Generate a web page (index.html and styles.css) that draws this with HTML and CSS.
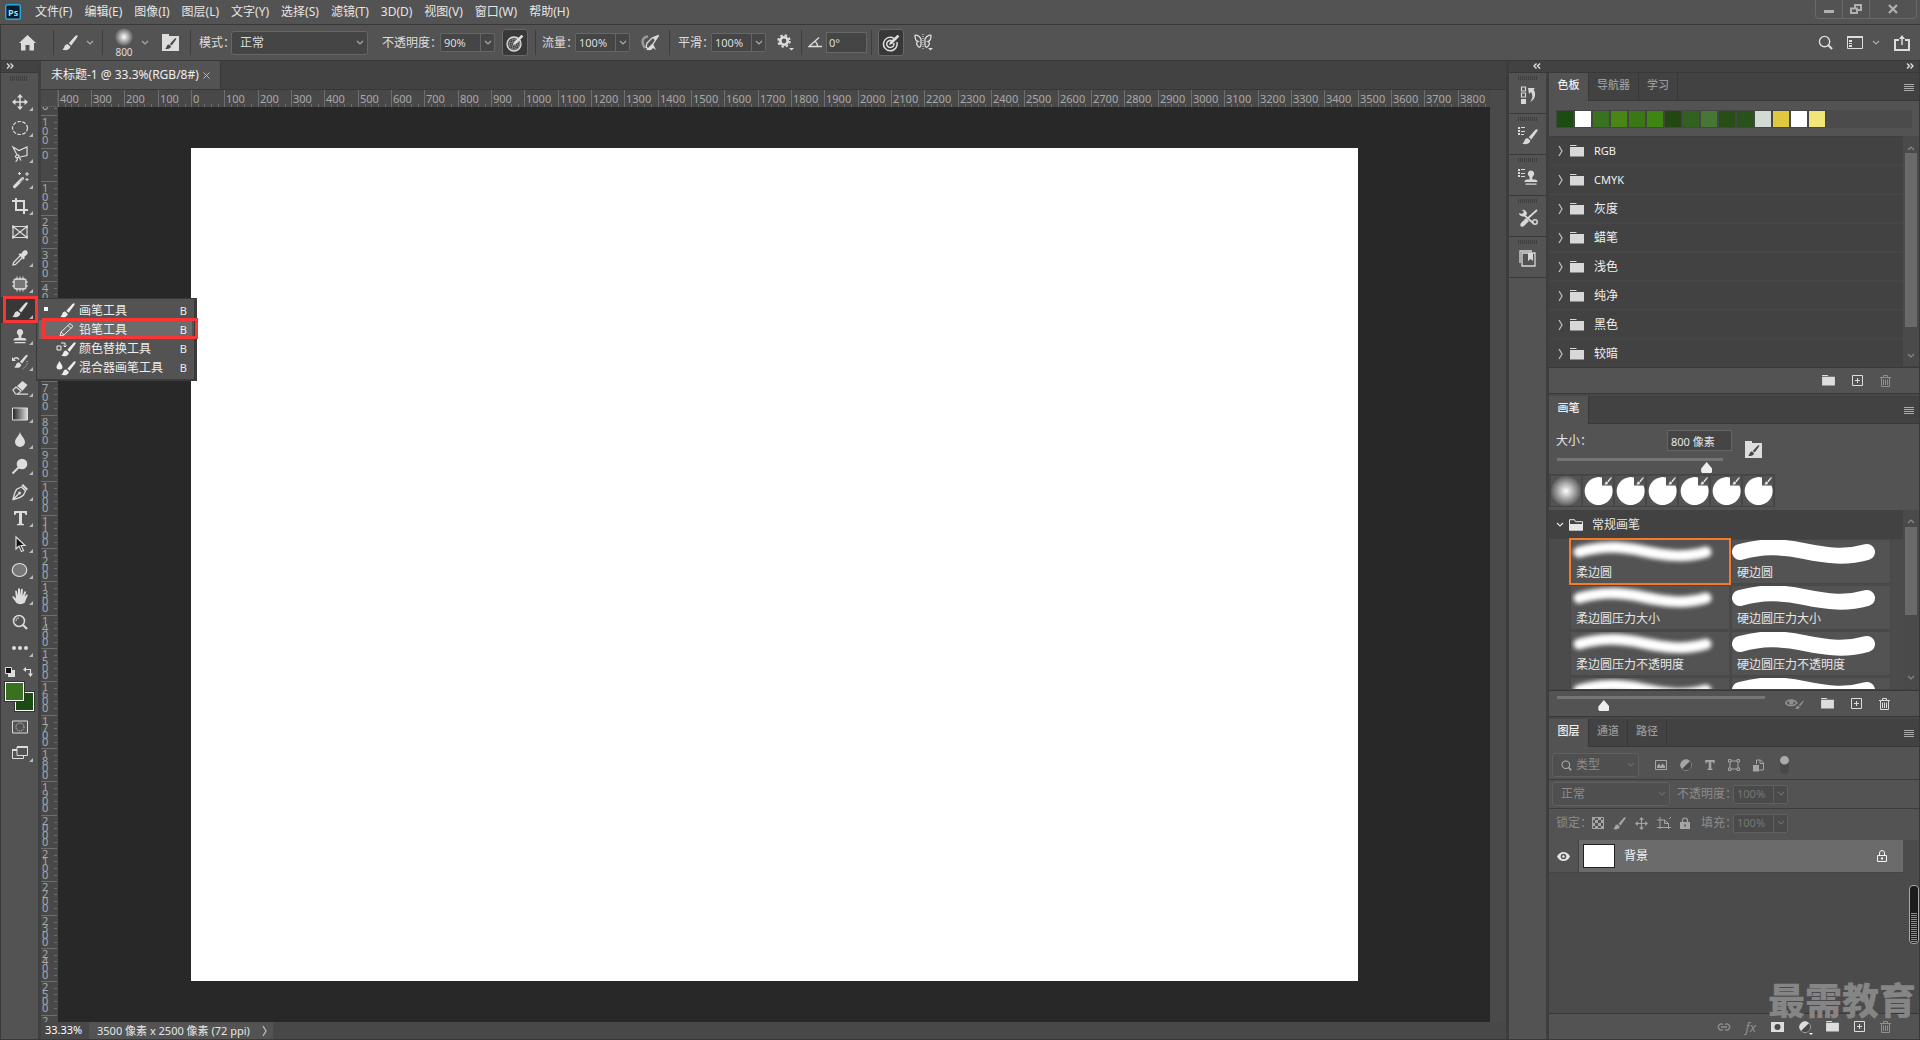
FILE: index.html
```html
<!DOCTYPE html>
<html lang="zh-CN">
<head>
  <meta charset="UTF-8">
  <title>未标题-1 @ 33.3%(RGB/8#)</title>
  <link rel="stylesheet" href="styles.css">
</head>
<body>

  <svg class="defs" width="0" height="0" aria-hidden="true">
    <radialGradient id="tip"><stop offset="0" stop-color="#fff"/><stop offset="1" stop-color="#fff" stop-opacity="0.05"/></radialGradient>
    <linearGradient id="grad"><stop offset="0" stop-color="#222"/><stop offset="1" stop-color="#ddd"/></linearGradient>
    <symbol id="chev" viewBox="0 0 8 6"><path d="M1 1l3 3 3-3" fill="none" stroke="currentColor" stroke-width="1.2"/></symbol>
    <symbol id="right" viewBox="0 0 6 12"><path d="M1 1l3 5-3 5" fill="none" stroke="currentColor" stroke-width="1.3"/></symbol>
    <symbol id="dbl" viewBox="0 0 8 6"><path d="M1 .5l2.500 2.500L1 5.500M4.500.5L7 3 4.500 5.500" fill="none" stroke="currentColor" stroke-width="1.300"/></symbol>
    <symbol id="brush" viewBox="0 0 16 16"><path d="M15.500.5c-1-.6-2.200.5-3.200 1.500L6.800 8.200l2.400 2.200 5-6.700c.8-1 2-2.600 1.300-3.200zM5.800 9.200c-1.800-.3-3 .8-3.400 2.600-.3 1.200-.9 2-2.200 2.700 2.800 1.400 7.500 1 8.200-2.900z"/></symbol>
    <symbol id="presets" viewBox="0 0 17 17"><path d="M0 0h7v2h10v15H0z"/><g fill="#484848" transform="translate(3 4) scale(.72)"><path d="M15.500.5c-1-.6-2.200.5-3.200 1.500L6.800 8.200l2.400 2.200 5-6.700c.8-1 2-2.600 1.300-3.200zM5.800 9.200c-1.800-.3-3 .8-3.400 2.600-.3 1.200-.9 2-2.200 2.700 2.800 1.400 7.500 1 8.200-2.900z"/></g></symbol>
    <symbol id="folder" viewBox="0 0 14 12"><path d="M0 0h6l1 1H0zM0 2h14v9.500H0z"/></symbol>
    <symbol id="folder-open" viewBox="0 0 14 12"><path d="M.5 11V.7h5l1 2h7V11z" fill="none" stroke="currentColor"/><path d="M0 5h14v6.500H0z"/></symbol>
    <symbol id="plus" viewBox="0 0 11 11"><path d="M.5.5h10v10H.5zM5.500 3v5M3 5.500h5" fill="none" stroke="currentColor"/></symbol>
    <symbol id="trash" viewBox="0 0 11 12"><path d="M0 2.500h11M3.500 2V.5h4V2M1.500 3v8.500h8V3M3.500 4.500v5.500M5.500 4.500v5.500M7.500 4.500v5.500" fill="none" stroke="currentColor"/></symbol>
    <symbol id="lines" viewBox="0 0 10 7"><path d="M0 .5h10M0 2.500h10M0 4.500h10M0 6.500h10" stroke="currentColor"/></symbol>
    <symbol id="move" viewBox="0 0 16 16"><path d="M8 0l3 3.500H8.700v3.800h3.800V5L16 8l-3.500 3V8.700H8.700v3.800H11L8 16l-3-3.500h2.300V8.700H3.500V11L0 8l3.500-3v2.300h3.800V3.500H5z"/></symbol>
    <symbol id="stamp" viewBox="0 0 16 16"><path d="M8 1a3.200 3.200 0 0 0-2 5.700c.8.900.8 2 .5 3.300H4c-1.500 0-2.500 1-2.500 2.500h13C14.500 11 13.500 10 12 10H9.500c-.3-1.300-.3-2.400.5-3.300A3.200 3.200 0 0 0 8 1zM2.500 14h11v1.200h-11z"/></symbol>
    <symbol id="stroke" viewBox="0 1 158 22"><path d="M10 13C32 7 50 7 74 12s42 7 63 1" fill="none" stroke="#fff" stroke-linecap="round"/></symbol>
    <symbol id="target" viewBox="0 0 18 18"><path d="M12 4.300A6.800 6.800 0 1 0 14.800 8M10 6.800a3.600 3.600 0 1 0 1.800 2.200" fill="none" stroke="currentColor" stroke-width="1.500"/><path d="M7 11l1-3L15.500.8l1.900 1.700L10 10z"/></symbol>
    <symbol id="adjust" viewBox="0 0 12 12"><circle cx="6" cy="6" r="5.300" fill="none" stroke="currentColor"/><path d="M9.800 2.200A5.300 5.300 0 0 1 2.200 9.800z" fill="#484848"/><path d="M9.800 2.200A5.300 5.300 0 0 0 2.200 9.800z"/></symbol>
    <symbol id="loupe" viewBox="0 0 16 16"><circle cx="7" cy="7" r="5.500" fill="none" stroke="currentColor" stroke-width="1.500"/><path d="M11 11l4 4" stroke="currentColor" stroke-width="2.200"/></symbol>
    <symbol id="lock" viewBox="0 0 10 12"><path d="M2.500 5V3.500a2.500 2.500 0 0 1 5 0V5" fill="none" stroke="currentColor" stroke-width="1.200"/><path d="M0 5h10v7H0z"/><path d="M5 7.500v2" stroke="#484848" stroke-width="1.500"/></symbol>
  </svg>

  <header class="menubar">
    <svg class="logo" width="16" height="16" viewBox="0 0 16 16"><rect x=".7" y=".7" width="14.600" height="14.600" rx="2" fill="#001e2c" stroke="#31a8e0" stroke-width="1.400"/><text x="3" y="11.500" fill="#9fdcff" font-size="9" font-weight="bold" font-family="Open Sans, sans-serif">Ps</text></svg>
    <nav class="menus">
      <button>文件(F)</button><button>编辑(E)</button><button>图像(I)</button><button>图层(L)</button><button>文字(Y)</button><button>选择(S)</button><button>滤镜(T)</button><button>3D(D)</button><button>视图(V)</button><button>窗口(W)</button><button>帮助(H)</button>
    </nav>
    <div class="winbtns">
      <button aria-label="最小化"><svg width="10" height="10"><path d="M0 6h10v3H0z"/></svg></button>
      <button aria-label="还原"><svg width="12" height="10" viewBox="0 0 12 10"><path d="M1 4.500h6V9H1zM5 4V1h6v5H7" fill="none" stroke="currentColor" stroke-width="2"/></svg></button>
      <button class="close" aria-label="关闭"><svg width="10" height="10" viewBox="0 0 10 10"><path d="M1 1l8 8M9 1L1 9" stroke="currentColor" stroke-width="2.200"/></svg></button>
    </div>
  </header>

  <div class="options">
    <div class="group home"><button aria-label="主页"><svg width="17" height="16" viewBox="0 0 17 16"><path d="M8.500 0L0 8h2v7.500h4.500V10h4v5.500H15V8h2z"/></svg></button></div>
    <div class="group brush-tool"><svg width="16" height="16"><use href="#brush"/></svg><svg class="arrow" width="8" height="6"><use href="#chev"/></svg></div>
    <div class="group tip-picker">
      <div class="tip"><svg width="18" height="18"><circle cx="9" cy="9" r="9" fill="url(#tip)"/></svg><span>800</span></div>
      <svg class="arrow" width="8" height="6"><use href="#chev"/></svg>
      <svg class="folder-brush" width="17" height="17"><use href="#presets"/></svg>
    </div>
    <div class="group mode">
      <label for="mode">模式：</label>
      <span class="select mode-select"><select id="mode"><option>正常</option></select><svg width="8" height="6"><use href="#chev"/></svg></span>
      <label for="opacity" class="opacity-label">不透明度：</label>
      <span class="combo"><input id="opacity" value="90%"><button aria-label="不透明度选项"><svg width="8" height="6"><use href="#chev"/></svg></button></span>
      <button class="toggle on" aria-label="压力不透明度"><svg width="18" height="18" viewBox="0 0 18 18"><circle cx="8" cy="10" r="7" fill="#777" stroke="currentColor" stroke-width="1.300"/><path d="M3 7h10M2 10h12M3 13h10M5 5v10M8 4v12M11 5v10" stroke="#333" stroke-dasharray="1 1"/><path d="M7 11l1-3L15.500.8l1.900 1.700L10 10z"/></svg></button>
    </div>
    <div class="group flow">
      <label for="flow">流量：</label>
      <span class="combo"><input id="flow" value="100%"><button aria-label="流量选项"><svg width="8" height="6"><use href="#chev"/></svg></button></span>
      <button class="airbrush" aria-label="喷枪"><svg width="18" height="16" viewBox="0 0 18 16"><path d="M7 1.500C1 2 0 8 4 13" fill="none" stroke="#999" stroke-width="2.500"/><path d="M17.500.5L11 3 6 8l-1 4 3 2.500L12 9z" fill="none" stroke="currentColor" stroke-width="1.300"/><path d="M17.500.5L12 3l2 2.500zM5 15l5-5 2-1 3 6-3-2-2 2z"/></svg></button>
    </div>
    <div class="group smooth">
      <label for="smooth">平滑：</label>
      <span class="combo"><input id="smooth" value="100%"><button aria-label="平滑选项"><svg width="8" height="6"><use href="#chev"/></svg></button></span>
      <button class="gear" aria-label="平滑设置"><svg width="18" height="17" viewBox="0 0 18 17"><circle cx="7" cy="7" r="3.700" fill="none" stroke="currentColor" stroke-width="2.600"/><circle cx="7" cy="7" r="5.700" fill="none" stroke="currentColor" stroke-width="2" stroke-dasharray="2.400 2.080"/><path d="M12 14h5l-2.500 2.500z"/></svg></button>
    </div>
    <div class="group angle">
      <label for="angle" aria-label="角度"><svg width="14" height="11" viewBox="0 0 14 11"><path d="M11 .5L1 9.500h13M7 4.500c2 1 2.500 3 2.500 5" fill="none" stroke="currentColor" stroke-width="1.300"/></svg></label>
      <input id="angle" value="0°">
    </div>
    <div class="group sym">
      <button class="toggle on" aria-label="压力大小"><svg width="18" height="18"><use href="#target"/></svg></button>
      <button class="butterfly" aria-label="对称"><svg width="19" height="17" viewBox="0 0 19 17"><path d="M7 5C5 1 1 .5 1 1.500c0 3 1 5.500 3 6-2 1-1.500 3-.5 4 1 2 3 3 3.500-1zM11 5c2-4 6-4.500 6-3.500 0 3-1 5.500-3 6 2 1 1.500 3 .5 4-1 2-3 3-3.500-1z" fill="none" stroke="currentColor" stroke-width="1.300"/><path d="M9 0v16" stroke="currentColor" stroke-dasharray="1 1"/><path d="M14 14h5l-2.500 2.500z"/></svg></button>
    </div>
    <div class="workspace">
      <button aria-label="搜索"><svg width="15" height="15"><use href="#loupe"/></svg></button>
      <button aria-label="工作区"><svg width="16" height="13" viewBox="0 0 16 13"><path d="M.5.500h15v12H.5z" fill="none" stroke="currentColor"/><path d="M0 0h16v2H0zM2 4h3v2H2zM2 7h3v1H2zM2 9h3v2H2z"/></svg></button>
      <svg class="arrow" width="8" height="6"><use href="#chev"/></svg>
      <button aria-label="共享"><svg width="16" height="16" viewBox="0 0 16 16"><path d="M5 5H1v10h14V5h-4" fill="none" stroke="currentColor" stroke-width="2"/><path d="M8 10V3" stroke="currentColor" stroke-width="1.500"/><path d="M8 0l3 4H5z"/></svg></button>
    </div>
  </div>

  <div class="work">
    <aside class="toolbar">
      <div class="strip"><svg width="8" height="6"><use href="#dbl"/></svg></div>
      <div class="grip"></div>
      <button class="tool" aria-label="移动"><svg viewBox="0 0 16 16"><use href="#move"/></svg></button>
      <button class="tool" aria-label="椭圆选框"><svg viewBox="0 0 16 16"><ellipse cx="8" cy="8" rx="7.500" ry="6.500" fill="none" stroke="currentColor" stroke-width="1.200" stroke-dasharray="3.500 1.500"/></svg></button>
      <button class="tool" aria-label="套索"><svg viewBox="0 0 16 16"><path d="M5 9L1 1l6 3.500L15 1v8.500l-7 1.500M7 9.500a2 1.500 0 1 0-3 2c1 1 3 0 3-2zM5 12c1 1 0 3-1.500 3.500M7 11l2 3.500" fill="none" stroke="currentColor" stroke-width="1.200"/></svg></button>
      <button class="tool" aria-label="魔棒"><svg viewBox="0 0 16 16"><path d="M1.500 13.500l8-8a1.500 1.500 0 0 1 2.200 2.200l-8 8a1.500 1.500 0 0 1-2.200-2.200z"/><path d="M10 6.500l1 1-3 3" stroke="#535353" fill="none"/><path d="M7.500 0v3M6 1.500h3M15 0v4M13 2h4M15 6v3M13.500 7.500h3" stroke="currentColor"/></svg></button>
      <button class="tool" aria-label="裁剪"><svg viewBox="0 0 16 16"><path d="M4 0v12h12M0 3h12v13" fill="none" stroke="currentColor" stroke-width="2" stroke-dasharray="25 1 6"/></svg></button>
      <button class="tool plain" aria-label="图框"><svg viewBox="0 0 16 16"><path d="M1 2.500h14v11H1zM1 2.500l14 11M15 2.500l-14 11" fill="none" stroke="currentColor" stroke-width="1.200"/><path d="M0 1.500h2v2H0zM14 1.500h2v2h-2zM0 12.500h2v2H0zM14 12.500h2v2h-2z"/></svg></button>
      <button class="tool" aria-label="吸管"><svg viewBox="0 0 16 16"><path d="M8 6l-6.500 6.500L1 15l2.500-.5L10 8" fill="none" stroke="currentColor" stroke-width="1.300"/><path d="M6.500 4.500l1.500-1.200 1.200.7C10 2 12.500-.8 14.800.8 17 3 14.500 5.500 12.300 6.700l.5 1.500-1.300 1.300z"/></svg></button>
      <button class="tool" aria-label="修补"><svg viewBox="0 0 16 16"><rect x="2" y="3" width="12" height="10" rx="2" fill="#777" stroke="currentColor" stroke-width="1.300"/><path d="M5 .5V4M8 .5V4M11 .5V4M5 12v3.500M8 12v3.500M11 12v3.500M0 6h3M0 10h3M13 6h3M13 10h3" stroke="currentColor"/></svg></button>
      <div class="brush-slot">
        <button class="tool active" aria-label="画笔"><svg viewBox="0 0 16 16"><use href="#brush"/></svg></button>
        <ul class="flyout">
          <li><button><i class="dot"></i><svg viewBox="0 0 20 16"><use href="#brush" x="4" width="15" height="15"/></svg><span>画笔工具</span><kbd>B</kbd></button></li>
          <li class="picked"><button><svg viewBox="0 0 20 16"><path d="M4 14l1-4L14 1.500l3 2.800L8 13zM5 10l3 3M12 3.500l3 3" fill="none" stroke="currentColor"/></svg><span>铅笔工具</span><kbd>B</kbd></button></li>
          <li><button><svg viewBox="0 0 20 16"><use href="#brush" x="5" y="1" width="15" height="15"/><path d="M1 5h4v4H1zM5 2h4v4M7.500 4.500L9 6l1.500-1.500" fill="none" stroke="currentColor"/></svg><span>颜色替换工具</span><kbd>B</kbd></button></li>
          <li><button><svg viewBox="0 0 20 16"><use href="#brush" x="5" y="1" width="15" height="15"/><path d="M3.500 1C2 4 .5 5 .5 7a3 2.500 0 0 0 6 0c0-2-1.500-3-3-6z"/></svg><span>混合器画笔工具</span><kbd>B</kbd></button></li>
        </ul>
      </div>
      <button class="tool" aria-label="仿制图章"><svg viewBox="0 0 16 16"><use href="#stamp"/></svg></button>
      <button class="tool" aria-label="历史记录画笔"><svg viewBox="0 0 16 16"><use href="#brush" x="2" y="0" width="14" height="15"/><path d="M7 5.500C5 3 3 3.500 2 5" fill="none" stroke="currentColor" stroke-width="1.500"/><path d="M0 3v4h4z"/><path d="M15 7c1 3-1 6-5 8" fill="none" stroke="currentColor" stroke-dasharray="1 1.500"/></svg></button>
      <button class="tool" aria-label="橡皮擦"><svg viewBox="0 0 16 16"><path d="M1 10l3-3 5 4-3 3H3.500z" fill="none" stroke="currentColor" stroke-width="1.200"/><path d="M5 6l5.500-5 5 4-5 5.800zM5 13.500h11v1.200H5z"/></svg></button>
      <button class="tool" aria-label="渐变"><svg viewBox="0 0 16 16"><path d="M.5 2h15v12H.5z" fill="url(#grad)" stroke="currentColor"/></svg></button>
      <button class="tool" aria-label="模糊"><svg viewBox="0 0 16 16"><path d="M8 0c-1 4-5 6.500-5 10a5 5 0 0 0 10 0c0-3.500-4-6-5-10z"/></svg></button>
      <button class="tool" aria-label="减淡"><svg viewBox="0 0 16 16"><circle cx="10" cy="6" r="5.300"/><path d="M7 9l-6.500 6.500" stroke="currentColor" stroke-width="2"/></svg></button>
      <button class="tool" aria-label="钢笔"><svg viewBox="0 0 16 16"><path d="M1 15.500C2 11 3 7 5 5l4.500-2 4 4L11.500 11c-2 2-6 3.500-10.500 4.500zM1.500 15l5-5" fill="none" stroke="currentColor" stroke-width="1.300"/><circle cx="7.500" cy="9" r="1.500"/><path d="M9.500 1.500L11 0l5 5-1.500 1.500z"/></svg></button>
      <button class="tool" aria-label="文字"><svg viewBox="0 0 16 16"><path d="M2 1h13v4h-1.500c-.3-1.500-.8-2-2-2H10v10c0 .8.500 1 2 1v1.200H5V14c1.500 0 2-.2 2-1V3H5.500c-1.200 0-1.700.5-2 2H2z"/></svg></button>
      <button class="tool" aria-label="路径选择"><svg viewBox="0 0 16 16"><path d="M4 1v12l3-3 2.500 5.500 2-1-2.500-5h4z" fill="#111" stroke="currentColor" stroke-width="1.200"/></svg></button>
      <button class="tool" aria-label="椭圆"><svg viewBox="0 0 16 16"><ellipse cx="7.500" cy="8" rx="7.300" ry="6.500" fill="#777" stroke="currentColor" stroke-width="1.200"/></svg></button>
      <button class="tool" aria-label="抓手"><svg viewBox="0 0 16 16"><path d="M4.500 15L.5 9.500c-.6-1 .8-1.500 1.500-.8L4 10.500 3.200 3.500c0-1.300 1.500-1.300 1.800 0l1 4V1.200c0-1.400 1.900-1.400 2 0V7.500l.9-5.800c.2-1.300 2-1 1.900.2L10.600 8l1.600-4c.5-1.200 2-.7 1.700.5L12.500 9l1.800-2.200c.6-.8 1.800-.2 1.400.8L12.500 15C10 16.500 6.500 16.500 4.500 15z"/></svg></button>
      <button class="tool plain" aria-label="缩放"><svg viewBox="0 0 16 16"><use href="#loupe" width="16" height="16"/><path d="M4 7c0-2 1-3 3-3" fill="none" stroke="currentColor"/></svg></button>
      <button class="tool" aria-label="编辑工具栏"><svg viewBox="0 0 16 16"><circle cx="2" cy="8" r="2"/><circle cx="8" cy="8" r="2"/><circle cx="14" cy="8" r="2"/></svg></button>
      <div class="mini">
        <svg width="10" height="10" viewBox="0 0 10 10"><path d="M3 3h7v7H3z"/><path d="M.5.500h6v6h-6z" fill="#111" stroke="currentColor"/></svg>
        <svg width="10" height="10" viewBox="0 0 10 10"><path d="M3 2.500h4.500V7" fill="none" stroke="currentColor" stroke-width="1.200"/><path d="M3 0v5L0 2.500zM5 6.500h5L7.500 10z"/></svg>
      </div>
      <div class="colors"><i class="bg"></i><i class="fg"></i></div>
      <button class="tool plain" aria-label="快速蒙版"><svg viewBox="0 0 16 16"><path d="M.5 2h15v12H.5z" fill="none" stroke="currentColor"/><circle cx="8" cy="8" r="4" fill="none" stroke="currentColor" stroke-dasharray="1 1"/></svg></button>
      <button class="tool" aria-label="屏幕模式"><svg viewBox="0 0 16 16"><path d="M5 5H.5v8.500h11V11M5 2h10.500v8.500H5z" fill="none" stroke="currentColor"/><path d="M5 1h11v2H5zM0 4h5v2H0z"/></svg></button>
    </aside>

    <main class="document">
      <div class="doctabs"><div class="doctab">未标题-1 @ 33.3%(RGB/8#)<button aria-label="关闭文档"><svg width="7" height="7" viewBox="0 0 7 7"><path d="M.5.500l6 6M6.500.500l-6 6" stroke="currentColor"/></svg></button></div></div>
      <div class="view">
        <div class="corner"></div>
        <div class="ruler-x" id="rulerX"></div>
        <div class="gutter"></div>
        <div class="ruler-y" id="rulerY"></div>
        <div class="canvas"><div class="page"></div></div>
      </div>
      <footer class="status"><span class="zoom">33.33%</span><span class="info">3500 像素 x 2500 像素 (72 ppi)<svg width="6" height="12"><use href="#right"/></svg></span></footer>
    </main>

    <aside class="dock">
      <div class="strip"><svg class="flip" width="8" height="6"><use href="#dbl"/></svg><svg width="8" height="6"><use href="#dbl"/></svg></div>
      <div class="dockbody">
        <div class="iconbar">
          <button aria-label="历史记录"><svg viewBox="0 0 20 18"><path d="M3.500 1h4v4h-4zM3.500 7h4v4h-4z" fill="none" stroke="currentColor" stroke-width="1.200"/><path d="M3 13h5v5H3zM10 2h7l-1.500 1.500C18 7 18 13 12 16c3-4 3-7 1-10L11 8z"/></svg></button>
          <button aria-label="画笔设置"><svg viewBox="0 0 20 18"><path d="M0 0h2v2H0zM3 0h4v1H3zM0 3h2v2H0zM3 4h4v1H3zM0 6h2v2H0zM3 7h3v1H3z"/><use href="#brush" x="4" y="2" width="16" height="16"/></svg></button>
          <button aria-label="仿制源"><svg viewBox="0 0 20 18"><path d="M0 1h2v2H0zM3 1h4v1H3zM0 4h2v2H0zM3 5h4v1H3zM0 7h2v2H0zM3 8h4v1H3z"/><use href="#stamp" x="5" y="1" width="16" height="17"/></svg></button>
          <button aria-label="工具预设"><svg viewBox="0 0 20 18"><path d="M5 5l10 9M19 1L9 10" fill="none" stroke="currentColor" stroke-width="1.800"/><path d="M1 4a4 3.500 0 0 0 6 3l2-2A4 4 0 0 0 4 1l2 2-2 2zM3 14l5-5 3 3-5 5c-2 2-5 0-3-3z"/><circle cx="17" cy="13" r="2.200" fill="none" stroke="currentColor" stroke-width="1.500"/></svg></button>
          <button aria-label="库"><svg viewBox="0 0 20 18"><path d="M4 3h13v13H4zM2 13V1h12" fill="none" stroke="currentColor" stroke-width="1.300"/><path d="M10 3h5v8l-2.500-2L10 11z"/></svg></button>
        </div>

        <div class="panels">
          <section class="panel swatches">
            <div class="tabs"><button class="current">色板</button><button>导航器</button><button>学习</button><svg class="burger" width="10" height="7"><use href="#lines"/></svg></div>
            <div class="chips" id="chips"></div>
            <div class="scroller">
              <ul class="folders">
                <li><svg class="tw" width="6" height="12"><use href="#right"/></svg><svg width="14" height="12"><use href="#folder"/></svg><b>RGB</b></li>
                <li><svg class="tw" width="6" height="12"><use href="#right"/></svg><svg width="14" height="12"><use href="#folder"/></svg><b>CMYK</b></li>
                <li><svg class="tw" width="6" height="12"><use href="#right"/></svg><svg width="14" height="12"><use href="#folder"/></svg>灰度</li>
                <li><svg class="tw" width="6" height="12"><use href="#right"/></svg><svg width="14" height="12"><use href="#folder"/></svg>蜡笔</li>
                <li><svg class="tw" width="6" height="12"><use href="#right"/></svg><svg width="14" height="12"><use href="#folder"/></svg>浅色</li>
                <li><svg class="tw" width="6" height="12"><use href="#right"/></svg><svg width="14" height="12"><use href="#folder"/></svg>纯净</li>
                <li><svg class="tw" width="6" height="12"><use href="#right"/></svg><svg width="14" height="12"><use href="#folder"/></svg>黑色</li>
                <li><svg class="tw" width="6" height="12"><use href="#right"/></svg><svg width="14" height="12"><use href="#folder"/></svg>较暗</li>
              </ul>
              <div class="bar"><svg width="8" height="6" class="up"><use href="#chev"/></svg><i></i><svg width="8" height="6"><use href="#chev"/></svg></div>
            </div>
            <div class="foot">
              <button aria-label="新建组"><svg width="13" height="11"><use href="#folder"/></svg></button>
              <button aria-label="新建色板"><svg width="11" height="11"><use href="#plus"/></svg></button>
              <button class="dim" aria-label="删除"><svg width="11" height="12"><use href="#trash"/></svg></button>
            </div>
          </section>

          <section class="panel brushes">
            <div class="tabs"><button class="current">画笔</button><svg class="burger" width="10" height="7"><use href="#lines"/></svg></div>
            <div class="sizebox">
              <div class="sizecol">
                <div class="sizerow"><label for="size">大小：</label><input id="size" value="800 像素"></div>
                <input type="range" aria-label="大小" value="93">
              </div>
              <svg width="17" height="17"><use href="#presets"/></svg>
            </div>
            <div class="recent" id="recent"></div>
            <div class="scroller">
              <div class="brushlist">
                <div class="grouprow"><svg width="8" height="6"><use href="#chev"/></svg><svg width="14" height="12"><use href="#folder-open"/></svg>常规画笔</div>
                <div class="presets">
                  <div class="preset soft chosen"><svg width="158" height="22"><use href="#stroke"/></svg>柔边圆</div>
                  <div class="preset"><svg width="158" height="22"><use href="#stroke"/></svg>硬边圆</div>
                  <div class="preset soft"><svg width="158" height="22"><use href="#stroke"/></svg>柔边圆压力大小</div>
                  <div class="preset"><svg width="158" height="22"><use href="#stroke"/></svg>硬边圆压力大小</div>
                  <div class="preset soft"><svg width="158" height="22"><use href="#stroke"/></svg>柔边圆压力不透明度</div>
                  <div class="preset"><svg width="158" height="22"><use href="#stroke"/></svg>硬边圆压力不透明度</div>
                  <div class="preset soft"><svg width="158" height="22"><use href="#stroke"/></svg></div>
                  <div class="preset"><svg width="158" height="22"><use href="#stroke"/></svg></div>
                </div>
              </div>
              <div class="bar"><svg width="8" height="6" class="up"><use href="#chev"/></svg><i></i><svg width="8" height="6"><use href="#chev"/></svg></div>
            </div>
            <div class="foot">
              <input type="range" aria-label="预览大小" value="21">
              <button class="dim" aria-label="实时笔尖预览"><svg width="19" height="12" viewBox="0 0 19 12"><path d="M.5 5C3 1 9 1 12 5 9 8.500 3 8.500.5 5z" fill="none" stroke="currentColor" stroke-width="1.300"/><circle cx="6.300" cy="4.500" r="2.200"/><use href="#brush" x="10" y="2" width="9" height="10"/></svg></button>
              <button aria-label="新建组"><svg width="13" height="11"><use href="#folder"/></svg></button>
              <button aria-label="新建画笔"><svg width="11" height="11"><use href="#plus"/></svg></button>
              <button aria-label="删除"><svg width="11" height="12"><use href="#trash"/></svg></button>
            </div>
          </section>

          <section class="panel layers">
            <div class="tabs"><button class="current">图层</button><button>通道</button><button>路径</button><svg class="burger" width="10" height="7"><use href="#lines"/></svg></div>
            <div class="row filter">
              <span class="select kind"><svg class="lens" width="11" height="11"><use href="#loupe"/></svg><select aria-label="筛选类型"><option>类型</option></select><svg width="8" height="6"><use href="#chev"/></svg></span>
              <div class="kinds">
                <svg width="12" height="10" viewBox="0 0 12 10"><path d="M.5.500h11v9H.5z" fill="none" stroke="currentColor"/><path d="M2 8V6l2-2.500L5.500 6l2-2.500L10 6v2z"/></svg>
                <svg width="12" height="12"><use href="#adjust"/></svg>
                <svg width="10" height="10" viewBox="1 0 15 16"><path d="M1 0h15v5h-2c-.3-1.500-.8-2-2-2h-1.500v10c0 .8.500 1 2 1V16h-8v-2c1.500 0 2-.2 2-1V3H5c-1.200 0-1.700.5-2 2H1z"/></svg>
                <svg width="12" height="12" viewBox="0 0 12 12"><path d="M2 2h8v8H2z" fill="none" stroke="currentColor"/><path d="M.5.500h2.500v2.500H.5zM9 .5h2.500v2.500H9zM.5 9h2.500v2.500H.5zM9 9h2.500v2.500H9z" fill="#535353" stroke="currentColor"/></svg>
                <svg width="11" height="13" viewBox="0 0 11 13"><path d="M3.500 5V1h4l3 3v7H6M7 1v3.500h3" fill="none" stroke="currentColor"/><path d="M0 6h6v6.500H0z"/></svg>
                <i class="switch"></i>
              </div>
            </div>
            <div class="row blend">
              <span class="select"><select aria-label="混合模式"><option>正常</option></select><svg width="8" height="6"><use href="#chev"/></svg></span>
              <label for="lop">不透明度：</label>
              <span class="combo off"><input id="lop" value="100%"><button aria-label="不透明度选项"><svg width="8" height="6"><use href="#chev"/></svg></button></span>
            </div>
            <div class="row locks">
              <span class="locklabel">锁定：</span>
              <div class="lockset">
                <svg width="12" height="12" viewBox="0 0 12 12"><path d="M.5.500h11v11H.5z" fill="none" stroke="currentColor"/><path d="M0 0h3v3H0zM6 0h3v3H6zM3 3h3v3H3zM9 3h3v3H9zM0 6h3v3H0zM6 6h3v3H6zM3 9h3v3H3zM9 9h3v3H9z"/></svg>
                <svg width="13" height="13"><use href="#brush"/></svg>
                <svg width="13" height="13"><use href="#move"/></svg>
                <svg width="14" height="12" viewBox="0 0 14 12"><path d="M0 3h7.500l4 3.500M3 0v12M0 10.500h14M11.500 6v6M7.500 3v3.500h4M12 2l2-2" fill="none" stroke="currentColor"/></svg>
                <svg width="10" height="12"><use href="#lock"/></svg>
              </div>
              <label for="fill">填充：</label>
              <span class="combo off"><input id="fill" value="100%"><button aria-label="填充选项"><svg width="8" height="6"><use href="#chev"/></svg></button></span>
            </div>
            <div class="layerlist">
              <div class="layer">
                <button class="eye" aria-label="可见性"><svg width="13" height="9" viewBox="0 0 13 9"><path d="M0 4.500C3-1.500 10-1.500 13 4.500 10 10.500 3 10.500 0 4.500z"/><circle cx="6.500" cy="4.500" r="2.800" fill="#535353"/><circle cx="6.500" cy="4.500" r="1.300"/></svg></button>
                <div class="layerrow"><i class="thumb"></i><span>背景</span><svg width="10" height="12" viewBox="0 0 10 12"><path d="M2.500 5V3a2.500 2.500 0 0 1 5 0v2M.5 5.500h9v6h-9z" fill="none" stroke="currentColor"/><path d="M4 7.500h2v2H4z"/></svg></div>
              </div>
              <div class="watermark">最需教育</div>
              <div class="meter"><i></i></div>
            </div>
            <div class="foot">
              <button class="dim" aria-label="链接图层"><svg width="14" height="8" viewBox="0 0 14 8"><path d="M6 1.500A3 3 0 1 0 6 6.500M8 1.500a3 3 0 1 1 0 5M4 4h6" fill="none" stroke="currentColor" stroke-width="1.300"/></svg></button>
              <button class="dim fx">fx</button>
              <button aria-label="图层蒙版"><svg width="13" height="10" viewBox="0 0 13 10"><path d="M0 0h13v10H0z"/><circle cx="6.500" cy="5" r="3" fill="#484848"/></svg></button>
              <button class="adj" aria-label="调整图层"><svg width="12" height="12"><use href="#adjust"/></svg></button>
              <button aria-label="新建组"><svg width="13" height="11"><use href="#folder"/></svg></button>
              <button aria-label="新建图层"><svg width="11" height="11"><use href="#plus"/></svg></button>
              <button class="dim" aria-label="删除"><svg width="11" height="12"><use href="#trash"/></svg></button>
            </div>
          </section>
        </div>
      </div>
    </aside>
  </div>

  <script>
    // Rulers: one cell for every 100 document pixels
    function fillRuler(id, from, to) {
      const ruler = document.getElementById(id);
      for (let v = from; v <= to; v += 100) {
        const cell = document.createElement('span');
        cell.textContent = Math.abs(v);
        ruler.appendChild(cell);
      }
    }
    fillRuler('rulerX', -400, 3800);
    fillRuler('rulerY', -200, 2600);

    const colors = ['#1b4d10', '#ffffff', '#38711f', '#488615', '#397815', '#3f8511', '#22480f', '#33611f',
      '#487634', '#274e17', '#29521a', '#d1dbd3', '#e0c740', '#ffffff', '#efe579'];
    document.getElementById('chips').innerHTML =
      colors.map(c => `<i style="background:${c}"></i>`).join('');

    const hard = '<svg width="30" height="30" viewBox="0 0 30 30"><path d="M19 1.500A14 14 0 1 0 28.500 9.500H19z" fill="#fff"/>' +
      '<use href="#brush" x="21" y="1" width="8" height="8"/></svg>';
    document.getElementById('recent').innerHTML =
      '<span><svg width="30" height="30"><circle cx="15" cy="15" r="15" fill="url(#tip)"/></svg></span>' +
      `<span>${hard}</span>`.repeat(6);
  </script>

</body>
</html>
```

FILE: styles.css
```css
*, *::before, *::after { box-sizing: border-box; }
body { margin: 0; height: 100vh; display: flex; flex-direction: column; overflow: hidden; background: #535353; border-bottom: 1px solid #383838; color: #e6e6e6; font: 12px/16px "Noto Sans", "Noto Sans CJK SC", sans-serif; }
button, input, select { font: inherit; color: inherit; border: 0; padding: 0; margin: 0; background: none; }
ul { list-style: none; margin: 0; padding: 0; }
svg { display: block; flex: none; fill: currentColor; }
i { display: block; }
.defs { position: absolute; }
#stroke { overflow: visible; }

/* menu bar */
.menubar { display: flex; height: 25px; padding-left: 5px; border-bottom: 1px solid #383838; }
.logo { margin-top: 4px; }
.menus { display: flex; flex: 1; padding-left: 8px; }
.menus button { padding: 0 6px; white-space: nowrap; }
.winbtns { display: flex; height: 19px; margin-right: 3px; border: 1px solid #686868; border-top: 0; border-radius: 0 0 4px 4px; color: #b0b0b0; }
.winbtns button { width: 27px; display: flex; align-items: center; justify-content: center; border-right: 1px solid #686868; }
.winbtns .close { width: 46px; border-right: 0; }

/* tool options */
.options { display: flex; height: 36px; border-bottom: 1px solid #383838; border-left: 1px solid #383838; color: #ddd; }
.group { display: flex; align-items: center; height: 25px; margin-top: 5px; padding-left: 8px; border-left: 1px solid #3e3e3e; }
.home { width: 52px; padding-left: 18px; border-left: 0; }
.brush-tool { width: 49px; gap: 8px; }
.arrow { color: #aaa; }
.tip-picker { width: 88px; padding-left: 12px; }
.tip { width: 18px; margin-right: 8px; font-size: 10px; line-height: 12px; text-align: center; }
.tip span { display: flex; justify-content: center; }
.folder-brush { margin-left: 13px; }
.mode { width: 345px; }
.select { position: relative; display: block; height: 24px; border: 1px solid #666; border-radius: 3px; background: #454545; }
.select select { appearance: none; width: 100%; height: 22px; padding-left: 8px; }
.select svg { position: absolute; right: 3px; top: 8px; color: #aaa; }
.mode-select { width: 137px; }
label { white-space: nowrap; }
.mode label:first-child { width: 32px; }
.opacity-label { width: 58px; margin-left: 14px; }
.combo { display: flex; width: 55px; height: 19px; border: 1px solid #666; border-radius: 2px; background: #454545; font-size: 11px; }
.combo input { width: 39px; padding-left: 3px; }
.combo button { width: 15px; display: flex; align-items: center; justify-content: center; border-left: 1px solid #666; color: #aaa; }
.toggle { width: 26px; height: 27px; display: flex; align-items: center; justify-content: center; border-radius: 3px; }
.toggle.on { background: #383838; border: 1px solid #686868; }
.mode .toggle { margin-left: 7px; }
.flow { width: 134px; padding-left: 6px; }
.flow label, .smooth label { width: 33px; }
.airbrush { margin-left: 11px; }
.smooth { width: 132px; }
.gear { margin-left: 11px; }
.angle { width: 70px; padding-left: 6px; gap: 4px; }
.angle input { width: 41px; height: 21px; padding-left: 2px; border: 1px solid #666; background: #454545; font-size: 11px; }
.sym { padding-left: 6px; gap: 10px; }
.workspace { display: flex; align-items: center; margin-left: auto; padding-right: 10px; }
.workspace button { margin-left: 14px; }
.workspace .arrow { margin-left: 9px; }

/* main area */
.work { flex: 1; display: flex; min-height: 0; }
.strip { display: flex; align-items: center; justify-content: space-between; height: 12px; padding: 0 5px 1px; border-bottom: 1px solid #383838; background: #424242; }
.toolbar { width: 41px; display: flex; flex-direction: column; border-left: 1px solid #383838; border-right: 3px solid #404040; color: #ddd; }
.grip { height: 5px; width: 18px; margin: 3px 0 8px 9px; background: repeating-linear-gradient(90deg, #3e3e3e 0 1px, transparent 1px 2px); }
.tool { position: relative; display: flex; align-items: center; width: 37px; height: 26px; flex: none; padding-left: 11px; }
.tool svg { width: 16px; height: 16px; overflow: visible; }
.tool::after { content: ""; position: absolute; left: 28px; bottom: 4px; border-left: 4px solid transparent; border-bottom: 4px solid #bbb; }
.tool.plain::after { display: none; }
.brush-slot { position: relative; height: 26px; }
.tool.active { background: #383838; }
.brush-slot::before { content: ""; position: absolute; z-index: 5; left: 2px; top: -1px; width: 35px; height: 27px; border: 3px solid #f93636; }
.flyout { position: absolute; z-index: 4; left: 35px; top: 1px; width: 161px; padding: 2px; border: solid #3a3a3a; border-width: 1px 3px 2px 1px; background: #535353; color: #eee; }
.flyout li { position: relative; }
.flyout button { position: relative; display: flex; align-items: center; width: 100%; height: 19px; padding-left: 17px; }
.flyout svg { width: 20px; height: 16px; margin-right: 3px; }
.flyout kbd { margin-left: auto; margin-right: 5px; font: inherit; font-size: 11px; }
.dot { position: absolute; left: 5px; top: 6px; width: 4px; height: 4px; background: #fff; }
.picked { background: #6b6b6b; }
.picked::after { content: ""; position: absolute; left: 3px; top: -2px; width: 156px; height: 21px; border: 3px solid #f93636; }
.mini { display: flex; justify-content: space-between; width: 28px; margin: 6px 0 5px 4px; }
.colors { position: relative; height: 30px; margin-bottom: 2px; }
.colors i { position: absolute; width: 19px; height: 19px; border: 1px solid #fff; outline: 1px solid #333; }
.colors .fg { left: 4px; top: 0; background: #38711f; }
.colors .bg { left: 14px; top: 10px; background: #1b4d10; }

.document { flex: 1; min-width: 0; display: flex; flex-direction: column; background: #4a4a4a; }
.doctabs { height: 29px; background: #424242; border-bottom: 1px solid #383838; }
.doctab { display: flex; align-items: center; width: 180px; height: 28px; padding: 0 10px; background: #535353; border-right: 1px solid #383838; white-space: nowrap; color: #eee; }
.doctab button { margin-left: auto; color: #bbb; }
.view { flex: 1; min-height: 0; display: grid; grid-template-columns: 17px 1fr 16px; grid-template-rows: 17px 1fr; }
.corner { background: #4a4a4a; border-right: 1px dotted #666; border-bottom: 1px dotted #666; }
.gutter { grid-row: 1 / 3; grid-column: 3; background: #4a4a4a; }
.ruler-x, .ruler-y { color: #a8a8a8; font-size: 11px; overflow: hidden; min-width: 0; min-height: 0; background: #484848; }
.ruler-x { grid-column: 2; grid-row: 1; display: flex; }
.ruler-x span { flex: none; width: 33px; height: 17px; padding-left: 1px; line-height: 18px; border-left: 1px solid #6e6e6e; background: linear-gradient(#6e6e6e, #6e6e6e) 6px 14px / 1px 3px no-repeat, linear-gradient(#6e6e6e, #6e6e6e) 12px 14px / 1px 3px no-repeat, linear-gradient(#6e6e6e, #6e6e6e) 19px 14px / 1px 3px no-repeat, linear-gradient(#6e6e6e, #6e6e6e) 26px 14px / 1px 3px no-repeat; }
.ruler-x span:nth-child(3n) { width: 34px; }
.ruler-y { grid-column: 1; grid-row: 2; }
.ruler-y span { display: block; width: 16px; height: 33px; padding: 1px 9px 0 1px; line-height: 9px; word-break: break-all; border-top: 1px solid #6e6e6e; background: linear-gradient(#6e6e6e, #6e6e6e) 13px 6px / 3px 1px no-repeat, linear-gradient(#6e6e6e, #6e6e6e) 13px 12px / 3px 1px no-repeat, linear-gradient(#6e6e6e, #6e6e6e) 13px 19px / 3px 1px no-repeat, linear-gradient(#6e6e6e, #6e6e6e) 13px 26px / 3px 1px no-repeat; }
.ruler-y span:nth-child(3n+1) { height: 34px; }
.ruler-y span:first-child { margin-top: -26px; }
.ruler-y span:nth-child(n+13) { line-height: 7px; }
.canvas { display: flex; align-items: center; justify-content: center; background: #282828; overflow: hidden; }
.page { flex: none; width: 1167px; height: 833px; background: #fff; }
.status { display: flex; height: 17px; line-height: 16px; background: #484848; }
.zoom { width: 48px; padding-left: 4px; font-size: 11px; color: #fff; }
.info { display: flex; align-items: center; width: 184px; padding-left: 8px; font-size: 11px; background: #535353; white-space: nowrap; }
.info svg { margin-left: auto; margin-right: 5px; color: #bbb; }

/* dock */
.dock { width: 414px; display: flex; flex-direction: column; border-left: 3px solid #3c3c3c; border-right: 1px solid #383838; }
.flip { transform: scaleX(-1); margin-left: 19px; }
.dockbody { flex: 1; display: flex; min-height: 0; }
.iconbar { width: 40px; border-right: 3px solid #3e3e3e; }
.iconbar button { display: flex; flex-direction: column; width: 37px; height: 41px; border-bottom: 1px solid #383838; padding: 3px 8px 0 9px; color: #d8d8d8; }
.iconbar button::before { content: ""; width: 19px; height: 4px; margin-bottom: 6px; background: repeating-linear-gradient(90deg, #3e3e3e 0 1px, transparent 1px 2px); }
.iconbar svg { width: 20px; height: 18px; overflow: visible; }
.panels { flex: 1; min-width: 0; display: flex; flex-direction: column; gap: 2px; background: #484848; }
.panel { display: flex; flex-direction: column; background: #535353; border-bottom: 1px solid #383838; }
.tabs { display: flex; height: 28px; flex: none; background: linear-gradient(#383838, #383838) bottom / 100% 1px no-repeat #424242; color: #9a9a9a; font-size: 11px; }
.tabs button { padding: 0 8px 4px; border-right: 1px solid #383838; line-height: 16px; font-weight: 500; }
.tabs .current { width: 40px; padding: 0 0 4px; background: #535353; color: #f0f0f0; }
.burger { margin: 11px 5px 0 auto; color: #aaa; }
.swatches { height: 321px; }
.chips { display: flex; gap: 2px; height: 18px; margin: 9px 7px 8px; padding: 1px; background: #4b4b4b; }
.chips i { width: 16px; height: 16px; outline: 1px solid #454545; }
.scroller { flex: 1; min-height: 0; display: flex; overflow: hidden; border-bottom: 1px solid #444; }
.folders { flex: 1; background: #424242; border-top: 1px solid #3e3e3e; }
.folders li { display: flex; align-items: center; height: 29px; padding-left: 9px; border-bottom: 2px solid #464646; color: #f0f0f0; }
.folders b { font-weight: normal; font-size: 11px; }
.tw { margin-right: 6px; color: #bbb; }
.folders svg + svg { margin-right: 10px; color: #d8d8d8; }
.bar { width: 16px; display: flex; flex-direction: column; align-items: center; padding: 9px 0 7px; background: #4a4a4a; color: #8a8a8a; }
.bar .up { transform: scaleY(-1); }
.bar i { width: 12px; height: 174px; margin: 2px 0 auto; background: #6a6a6a; }
.foot { display: flex; align-items: center; justify-content: flex-end; height: 26px; flex: none; padding-right: 28px; border-top: 1px solid #383838; color: #ddd; }
.foot button { margin-left: 17px; }
.dim { color: #909090; }

.brushes { height: 321px; }
.sizebox { display: flex; height: 50px; padding: 6px 7px 0; }
.sizecol { width: 188px; }
.sizerow { display: flex; align-items: center; justify-content: space-between; width: 176px; height: 21px; }
.sizerow input { width: 65px; height: 21px; padding-left: 3px; border: 1px solid #666; background: #454545; font-size: 11px; }
.sizebox > svg { margin: 11px 0 0 1px; color: #ddd; }
input[type=range] { appearance: none; display: block; height: 15px; background: linear-gradient(#757575, #757575) top / 100% 3px no-repeat; }
input[type=range]::-webkit-slider-thumb { appearance: none; width: 11px; height: 11px; margin-top: 4px; background: #eee; clip-path: polygon(50% 0, 100% 60%, 100% 90%, 90% 100%, 10% 100%, 0 90%, 0 60%); }
.sizecol input[type=range] { width: 166px; margin: 7px 0 0 1px; }
.recent { display: flex; width: 226px; height: 33px; margin-bottom: 3px; padding: 1px; border: 1px solid #444; background: #484848; gap: 2px; }
.recent span { width: 30px; height: 30px; background: #535353; }
.brushlist { flex: 1; overflow: hidden; background: #4b4b4b; }
.grouprow { display: flex; align-items: center; gap: 5px; height: 29px; padding-left: 7px; background: #424242; }
.grouprow svg + svg { margin-right: 4px; }
.presets { display: grid; grid-template-columns: 160px 160px; gap: 1px; margin-left: 21px; }
.preset { height: 45px; padding: 0 5px; background: #535353; border: 1px solid #484848; overflow: hidden; line-height: 21px; }
.preset svg { margin-left: -7px; stroke-width: 16px; overflow: visible; }
.preset.soft svg { stroke-width: 11px; filter: blur(2px); }
.chosen { border: 2px solid #f87a28; margin: -1px; height: 47px; }
.brushes .bar { padding: 8px 0; }
.brushes .bar i { height: 88px; margin-top: 3px; }
.brushes .foot { padding-right: 29px; }
.brushes .foot input { width: 208px; margin: 0 auto 0 8px; }

.layers { flex: 1; border-bottom: 0; }
.row { display: flex; align-items: center; height: 29px; padding: 0 3px; border-bottom: 1px solid #3c3c3c; color: #8c8c8c; }
.row .select { background: #4f4f4f; border-color: #606060; }
.row .select svg { color: #6a6a6a; }
.filter { height: 33px; padding-top: 4px; }
.kind { width: 87px; }
.row .select .lens { left: 8px; top: 6px; color: #b0b0b0; }
.kind select { padding-left: 23px; }
.kinds { display: flex; align-items: center; gap: 13px; margin-left: 16px; color: #a5a5a5; }
.switch { width: 9px; height: 18px; margin-left: 3px; border-radius: 5px; background: radial-gradient(circle at 50% 4px, #aaa 4px, #484848 5px); }
.blend .select { width: 118px; }
.blend label { margin-left: 7px; width: 56px; }
.combo.off { background: #4a4a4a; border-color: #606060; color: #777; }
.combo.off button { border-color: #606060; color: #6a6a6a; }
.locks { border-bottom: 0; height: 28px; padding-left: 7px; }
.locklabel { width: 36px; white-space: nowrap; }
.lockset { display: flex; align-items: center; gap: 9px; width: 109px; color: #a5a5a5; }
.locks label { width: 32px; }
.layerlist { position: relative; flex: 1; margin-top: 3px; background: #4b4b4b; }
.layer { display: flex; height: 33px; margin-right: 16px; border-bottom: 1px solid #444; }
.eye { width: 30px; display: flex; align-items: center; justify-content: center; background: #535353; border-right: 1px solid #424242; }
.layerrow { flex: 1; display: flex; align-items: center; padding: 0 16px 0 4px; background: #6b6b6b; color: #f5f5f5; }
.thumb { width: 32px; height: 24px; margin-right: 9px; border: 1px solid #222; background: #fff; }
.layerrow svg { margin-left: auto; }
.watermark { position: absolute; right: 3px; bottom: -8px; font-size: 37px; line-height: 40px; font-weight: 900; color: #858585; white-space: nowrap; z-index: 2; }
.meter { position: absolute; right: 0; top: 45px; width: 10px; height: 59px; padding: 27px 1px 1px; border: 1px solid #aaa; border-radius: 4px; background: #1c1c1c; }
.meter i { height: 29px; background: repeating-linear-gradient(#35c95a 0 1px, #1c1c1c 1px 2px); }
.layers .foot button { margin-left: 15px; }
.fx { font-style: italic; font-size: 13px; }
.adj { position: relative; }
.adj::after { content: ""; position: absolute; left: 10px; top: 12px; border: 2px solid transparent; border-top-color: #fff; }
```
